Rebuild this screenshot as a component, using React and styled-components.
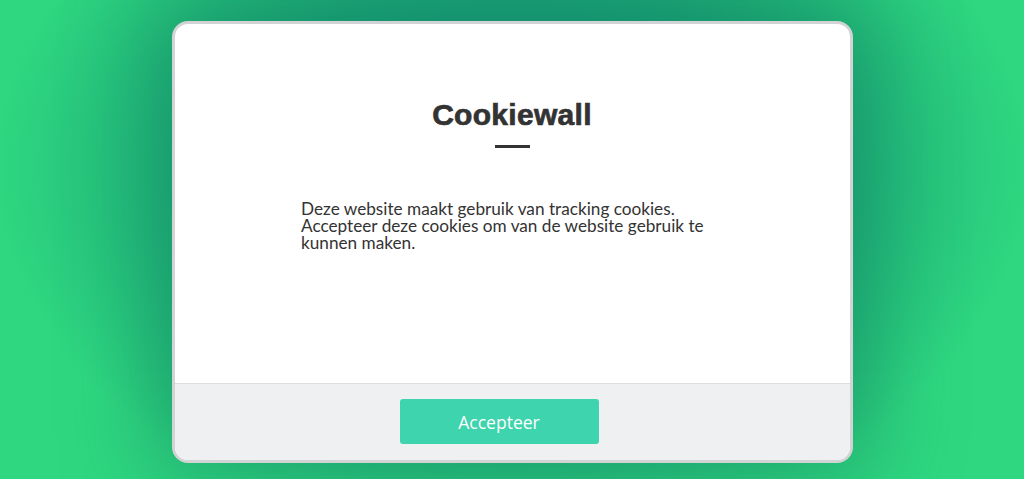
import React from "react";
import styled, { createGlobalStyle } from "styled-components";

const Global = createGlobalStyle`
  html, body { margin: 0; padding: 0; }
  body {
    height: 479px;
    overflow: hidden;
    background: #2fd880;
  }
  #root { height: 100%; }
`;

const Page = styled.div`
  height: 479px;
  box-sizing: border-box;
  padding-top: 21px;
  display: flex;
  justify-content: center;
  align-items: flex-start;
  background: radial-gradient(ellipse 60% 90% at 50% 35%, #138f7a 0%, #1caa78 45%, #2fd880 85%);
`;

const Modal = styled.div`
  width: 681px;
  height: 442px;
  box-sizing: border-box;
  border: 3px solid #d2d3d4;
  border-radius: 16px;
  background: #fff;
  overflow: hidden;
  display: flex;
  flex-direction: column;
  box-shadow: 0 0 90px 20px rgba(14, 110, 90, 0.45);
`;

const Body = styled.div`
  flex: 1;
  display: flex;
  flex-direction: column;
  align-items: center;
  padding-top: 73px;
`;

const Title = styled.h1`
  margin: 0;
  font-family: "Liberation Sans", Arial, sans-serif;
  font-weight: 700;
  font-size: 30px;
  line-height: 36px;
  color: #333;
  letter-spacing: 0.3px;
  -webkit-text-stroke: 0.7px #333;
`;

const Rule = styled.div`
  width: 35px;
  height: 3px;
  background: #333;
  margin-top: 12px;
`;

const Text = styled.p`
  margin: 52px 0 0 2px;
  width: 424px;
  font-family: Lato, "Noto Sans", sans-serif;
  font-size: 17.2px;
  line-height: 17px;
  color: #333;
`;

const Footer = styled.div`
  height: 77px;
  box-sizing: border-box;
  border-top: 1px solid #dcdde0;
  background: #eff0f1;
  display: flex;
  justify-content: center;
  align-items: flex-start;
  padding: 15px 26px 0 0;
`;

const Button = styled.button`
  width: 199px;
  height: 45px;
  border: none;
  border-radius: 3px;
  background: #3ed4ad;
  color: #fff;
  font-family: "Open Sans", sans-serif;
  font-size: 17.5px;
  cursor: pointer;
`;

export default function App() {
  return (
    <>
      <Global />
      <Page>
        <Modal>
          <Body>
            <Title>Cookiewall</Title>
            <Rule />
            <Text>
              Deze website maakt gebruik van tracking cookies. Accepteer deze
              cookies om van de website gebruik te kunnen maken.
            </Text>
          </Body>
          <Footer>
            <Button>Accepteer</Button>
          </Footer>
        </Modal>
      </Page>
    </>
  );
}
